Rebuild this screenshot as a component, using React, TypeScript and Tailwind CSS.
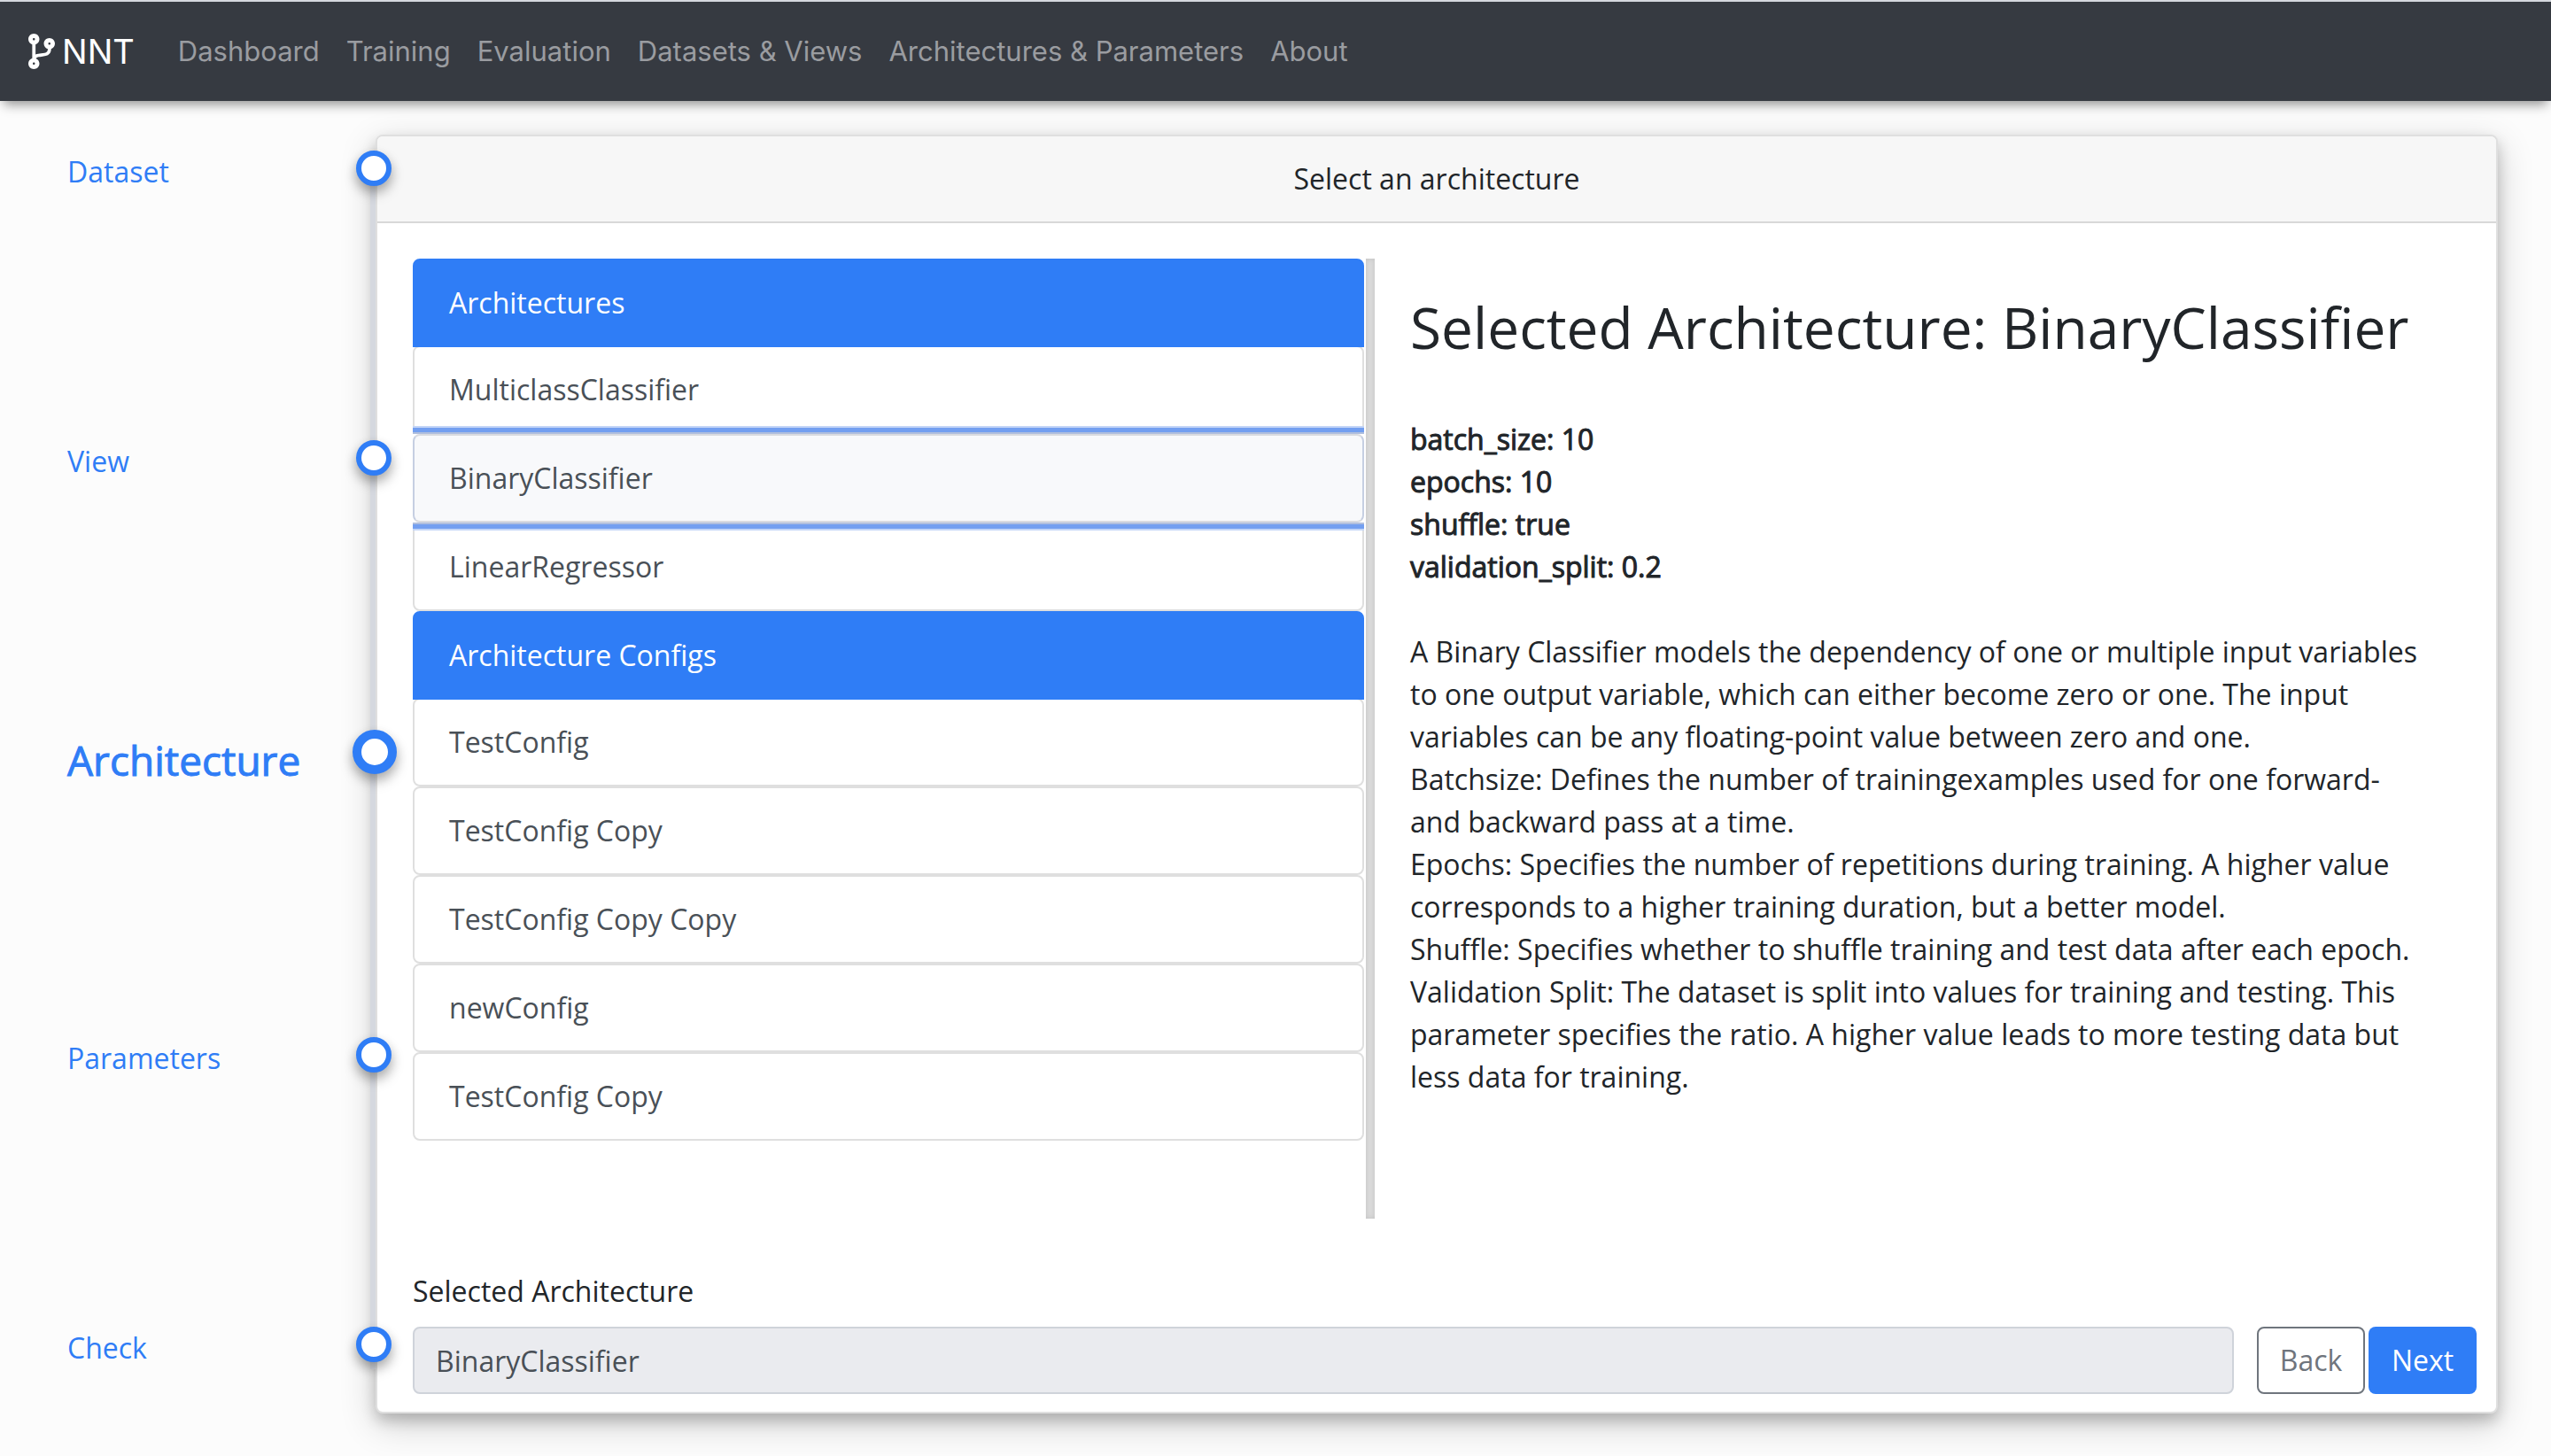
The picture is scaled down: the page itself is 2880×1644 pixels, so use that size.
import { useState } from "react";
import { FaCodeBranch } from "react-icons/fa";

const navLinks = [
  "Dashboard",
  "Training",
  "Evaluation",
  "Datasets & Views",
  "Architectures & Parameters",
  "About",
];

const steps = ["Dataset", "View", "Architecture", "Parameters", "Check"];
const currentStep = "Architecture";

const architectures = ["MulticlassClassifier", "BinaryClassifier", "LinearRegressor"];
const configs = ["TestConfig", "TestConfig Copy", "TestConfig Copy Copy", "newConfig", "TestConfig Copy"];

const parameters = [
  ["batch_size", "10"],
  ["epochs", "10"],
  ["shuffle", "true"],
  ["validation_split", "0.2"],
];

const description = [
  "A Binary Classifier models the dependency of one or multiple input variables to one output variable, which can either become zero or one. The input variables can be any floating-point value between zero and one.",
  "Batchsize: Defines the number of trainingexamples used for one forward- and backward pass at a time.",
  "Epochs: Specifies the number of repetitions during training. A higher value corresponds to a higher training duration, but a better model.",
  "Shuffle: Specifies whether to shuffle training and test data after each epoch.",
  "Validation Split: The dataset is split into values for training and testing. This parameter specifies the ratio. A higher value leads to more testing data but less data for training.",
];

function Navbar() {
  return (
    <nav className="relative z-20 flex items-center border-t-2 border-[#d5d8de] bg-[#363a41] px-8 py-4 font-['Inter',sans-serif] shadow-[0_8px_12px_-4px_rgba(0,0,0,0.42)]">
      <a href="#" className="mr-[34px] flex items-center gap-2 text-[38px] leading-[60px] text-white">
        <FaCodeBranch className="h-10 w-[30px]" />
        NNT
      </a>
      <ul className="flex py-2">
        {navLinks.map((link) => (
          <li key={link}>
            <a href="#" className="block px-[15px] py-2 text-[31px] leading-12 text-[#9a9ca0]">
              {link}
            </a>
          </li>
        ))}
      </ul>
    </nav>
  );
}

function StepRail() {
  return (
    <aside className="relative z-10 -mr-[18px] w-[442px] shrink-0 pt-[18px] pb-[50px] pl-[76px]">
      <span className="absolute top-[18px] right-[18px] bottom-[50px] w-1.5 bg-[#d5d8df]" />
      <ol className="relative flex h-full flex-col justify-between text-[#2f7df6]">
        {steps.map((step) =>
          step === currentStep ? (
            <li key={step} className="-mr-1.5 flex items-start justify-between" aria-current="step">
              <a href="#" className="text-[46px] leading-[68px] [-webkit-text-stroke:1px]">
                {step}
              </a>
              <span className="size-[50px] rounded-full border-10 border-[#2f7df6] bg-white shadow-[0_8px_16px_rgba(0,0,0,0.2),0_6px_12px_rgba(0,0,0,0.19)]" />
            </li>
          ) : (
            <li key={step} className="flex items-start justify-between">
              <a href="#" className="text-[32px] leading-12">
                {step}
              </a>
              <span className="size-10 rounded-full border-6 border-[#2f7df6] bg-white shadow-[0_8px_16px_rgba(0,0,0,0.2),0_6px_12px_rgba(0,0,0,0.19)]" />
            </li>
          ),
        )}
      </ol>
    </aside>
  );
}

interface GroupProps {
  title: string;
  items: string[];
  selected: string;
  onSelect: (name: string) => void;
}

function ListGroup({ title, items, selected, onSelect }: GroupProps) {
  return (
    <section>
      <h3 className="relative z-10 rounded-t-lg border-2 border-[#2f7df6] bg-[#2f7df6] px-[39px] py-6 leading-12 text-white">
        {title}
      </h3>
      <ul className="-mt-0.5">
        {items.map((item, i) => (
          <li
            key={i}
            className={
              item === selected
                ? "relative z-10 bg-white shadow-[0_0_0_2px_#afbedd,0_0_0_7px_#739ff0,0_0_0_9px_#c3d5f7]"
                : ""
            }
          >
            <button
              type="button"
              onClick={() => onSelect(item)}
              className={
                item === selected
                  ? "block w-full rounded-lg border-2 border-x-[#c6cfe2] border-y-[#d9dbe0] bg-[#f8f9fb] px-[39px] py-6 text-left leading-12 text-[#495057]"
                  : "block w-full rounded-lg border-2 border-[#dfdfdf] bg-white px-[39px] py-6 text-left leading-12 text-[#495057]"
              }
            >
              {item}
            </button>
          </li>
        ))}
      </ul>
    </section>
  );
}

export default function App() {
  const [selected, setSelected] = useState("BinaryClassifier");

  return (
    <div className="flex min-h-screen flex-col bg-[#fcfcfc] font-['Open_Sans',sans-serif] text-[32px] leading-12 text-[#212529]">
      <Navbar />
      <main className="flex flex-1 pt-[38px] pr-[60px] pb-12">
        <StepRail />
        <div className="flex min-w-0 flex-1 flex-col rounded-lg border-2 border-[#dfdfdf] bg-white shadow-[0_8px_16px_rgba(0,0,0,0.2),0_12px_40px_rgba(0,0,0,0.19)]">
          <header className="rounded-t-md border-b-2 border-[#d8d8d8] bg-[#f7f7f7] px-10 py-6 text-center">
            Select an architecture
          </header>
          <div className="grid flex-1 grid-cols-[543fr_613fr] px-10 pt-10">
            <div className="flex">
              <div className="mr-0.5 flex-1 overflow-hidden">
                <ListGroup title="Architectures" items={architectures} selected={selected} onSelect={setSelected} />
                <ListGroup title="Architecture Configs" items={configs} selected={selected} onSelect={setSelected} />
              </div>
              <div className="w-2.5 bg-[#dcdcdc] shadow-[inset_0_0_6px_rgba(0,0,0,0.12)]" />
            </div>
            <article className="px-10 pt-10">
              <h2 className="mb-16 text-[64px] leading-[76px]">Selected Architecture: {selected}</h2>
              <ul className="mb-12 [-webkit-text-stroke:1px]">
                {parameters.map(([name, value]) => (
                  <li key={name}>
                    {name}: {value}
                  </li>
                ))}
              </ul>
              {description.map((text) => (
                <p key={text}>{text}</p>
              ))}
            </article>
          </div>
          <form className="mt-[58px] pr-[22px] pb-5 pl-10" onSubmit={(e) => e.preventDefault()}>
            <label htmlFor="selected-architecture" className="mb-4 block">
              Selected Architecture
            </label>
            <div className="flex">
              <input
                id="selected-architecture"
                readOnly
                value={selected}
                className="mr-[26px] h-[76px] min-w-0 flex-1 rounded-lg border-2 border-[#cfd3da] bg-[#eaebef] px-6 text-[#495057]"
              />
              <button type="button" className="mr-1 h-[76px] w-[122px] rounded-lg border-2 border-[#6f757d] text-[#6f757d]">
                Back
              </button>
              <button type="submit" className="h-[76px] w-[122px] rounded-lg bg-[#2f7df6] text-white">
                Next
              </button>
            </div>
          </form>
        </div>
      </main>
    </div>
  );
}
